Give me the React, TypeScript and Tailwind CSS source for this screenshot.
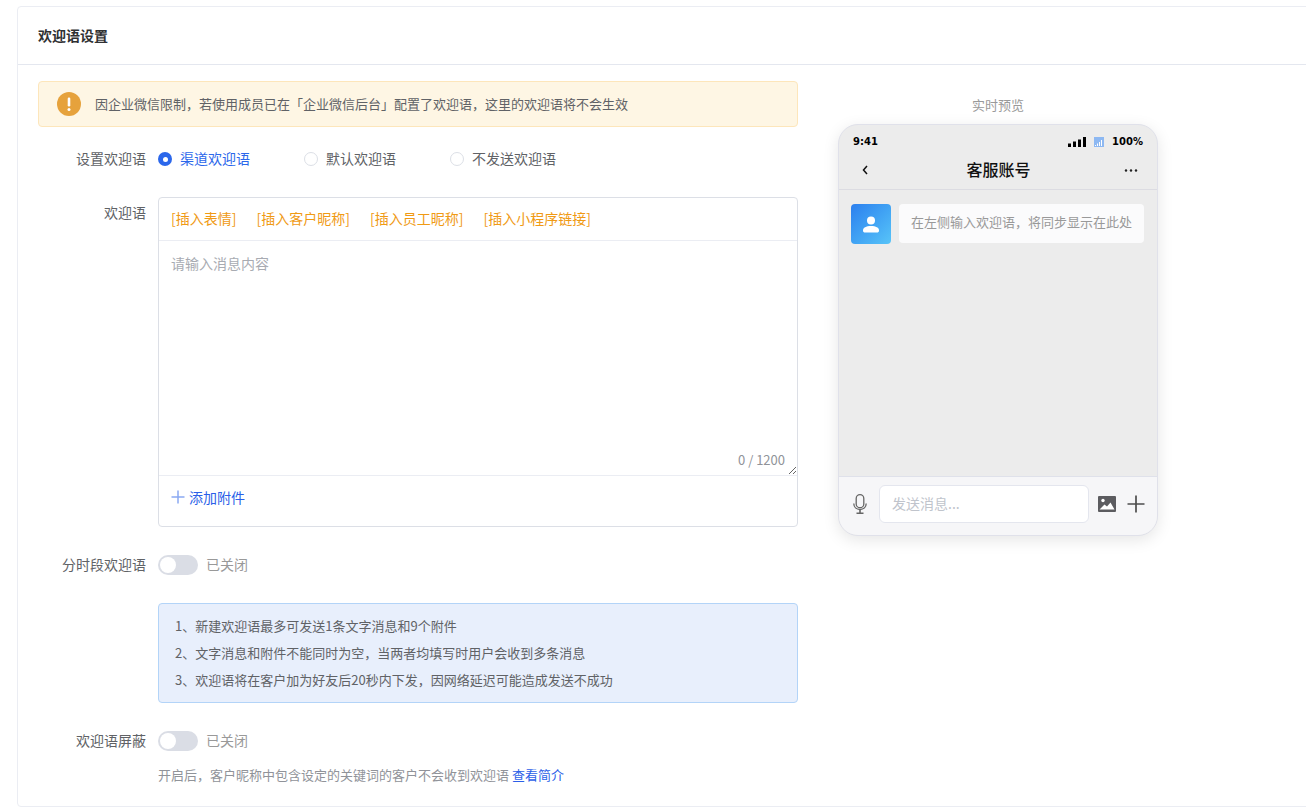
import React from "react";

const font = { fontFamily: '"Noto Sans CJK SC", "Noto Sans", sans-serif' };

function Radio({ label, checked }: { label: string; checked?: boolean }) {
  return (
    <div className="flex w-[146px] items-center">
      {checked ? (
        <span className="flex h-[14px] w-[14px] items-center justify-center rounded-full bg-[#2b67eb]">
          <span className="h-[5px] w-[5px] rounded-full bg-white" />
        </span>
      ) : (
        <span className="h-[14px] w-[14px] rounded-full border border-[#dcdfe6] bg-white" />
      )}
      <span className={`ml-2 h-5 text-[14px] leading-[18px] ${checked ? "text-[#2b67eb]" : "text-[#606266]"}`}>{label}</span>
    </div>
  );
}

function Toggle() {
  return (
    <div className="flex items-center">
      <span className="flex h-5 w-10 items-center rounded-full bg-[#dadde5] pl-[2px]">
        <span className="h-4 w-4 rounded-full bg-white" />
      </span>
      <span className="ml-2 h-5 text-[14px] leading-[18px] text-[#999999]">已关闭</span>
    </div>
  );
}

function Label({ children }: { children: React.ReactNode }) {
  return <div className="h-5 w-[108px] shrink-0 text-right text-[14px] leading-[18px] text-[#606266]">{children}</div>;
}

export default function App() {
  return (
    <div style={font} className="h-[810px] w-[1306px] overflow-hidden bg-white pl-[17px] pt-[6px]">
      <div className="h-[801px] w-[1400px] rounded-[4px] border border-[#ebedf3] bg-white">
        <div className="flex h-[58px] items-center border-b border-[#e4e7ef] pl-5 text-[14px] font-bold text-[#303133]">
          欢迎语设置
        </div>
        <div className="flex pl-5 pt-4">
          <div className="w-[760px] shrink-0">
            <div className="flex h-[46px] items-center rounded-[4px] border border-[#fde6bb] bg-[#fef6e4] pl-[18px]">
              <svg width="24" height="24" viewBox="0 0 24 24">
                <circle cx="12" cy="12" r="12" fill="#e6a23c" />
                <rect x="10.7" y="5.5" width="2.6" height="9" rx="1.2" fill="#fff" />
                <circle cx="12" cy="17.4" r="1.5" fill="#fff" />
              </svg>
              <span className="ml-[14px] text-[13px] leading-5 text-[#606266]">
                因企业微信限制，若使用成员已在「企业微信后台」配置了欢迎语，这里的欢迎语将不会生效
              </span>
            </div>

            <div className="mt-[22px] flex items-center">
              <Label>设置欢迎语</Label>
              <div className="ml-3 flex">
                <Radio label="渠道欢迎语" checked />
                <Radio label="默认欢迎语" />
                <Radio label="不发送欢迎语" />
              </div>
            </div>

            <div className="mt-[28px] flex">
              <div className="pt-[6px]">
                <Label>欢迎语</Label>
              </div>
              <div className="ml-3 h-[330px] w-[640px] rounded-[4px] border border-[#dcdfe6]">
                <div className="flex h-[43px] items-center gap-[20px] border-b border-[#ebedf3] pb-[2px] pl-3 text-[14px] text-[#f09a14]">
                  <span>[插入表情]</span>
                  <span>[插入客户昵称]</span>
                  <span>[插入员工昵称]</span>
                  <span>[插入小程序链接]</span>
                </div>
                <div className="relative h-[235px] border-b border-[#ebedf3]">
                  <textarea
                    placeholder="请输入消息内容"
                    className="block h-full w-full resize-y px-3 pt-3 text-[14px] leading-5 outline-none placeholder:text-[#a8abb2]"
                  />
                  <span className="absolute bottom-[5px] right-3 text-[13px] leading-5 text-[#909399]">0 / 1200</span>
                </div>
                <div className="flex h-[50px] items-center pb-2 pl-3 text-[14px] text-[#2b5fe8]">
                  <svg width="14" height="14" viewBox="0 0 14 14" className="mr-1">
                    <path d="M7 0.5v13M0.5 7h13" stroke="#8aa9f2" strokeWidth="1.5" />
                  </svg>
                  添加附件
                </div>
              </div>
            </div>

            <div className="mt-[28px] flex items-center">
              <Label>分时段欢迎语</Label>
              <div className="ml-3">
                <Toggle />
              </div>
            </div>

            <div className="ml-[120px] mt-[28px] flex h-[100px] w-[640px] flex-col justify-center gap-[7px] rounded-[4px] border border-[#b3d4f8] bg-[#e8effc] pl-4 text-[13px] leading-5 text-[#606266]">
              <div>1、新建欢迎语最多可发送1条文字消息和9个附件</div>
              <div>2、文字消息和附件不能同时为空，当两者均填写时用户会收到多条消息</div>
              <div>3、欢迎语将在客户加为好友后20秒内下发，因网络延迟可能造成发送不成功</div>
            </div>

            <div className="mt-[28px] flex items-center">
              <Label>欢迎语屏蔽</Label>
              <div className="ml-3">
                <Toggle />
              </div>
            </div>

            <div className="ml-[120px] mt-[14px] text-[13px] leading-5 text-[#909399]">
              开启后，客户昵称中包含设定的关键词的客户不会收到欢迎语 <span className="text-[#2b5fe8]">查看简介</span>
            </div>
          </div>

          <div className="ml-10 w-[320px] shrink-0">
            <div className="mb-[9px] pt-[14px] text-center text-[13px] leading-5 text-[#999999]">实时预览</div>
            <div className="flex h-[412px] flex-col overflow-hidden rounded-[20px] border border-[#e0e1ea] bg-[#ececec] shadow-[0_4px_16px_rgba(0,0,0,0.10)]">
              <div className="flex h-[30px] shrink-0 items-center justify-between px-[14px] pt-[3px] text-[10px] font-bold leading-none text-black">
                <span style={{ fontFamily: '"DejaVu Sans", sans-serif' }}>9:41</span>
                <div className="flex items-center">
                  <svg width="18" height="10" viewBox="0 0 18 10" fill="#000">
                    <rect x="0" y="6.5" width="3" height="3.5" />
                    <rect x="5" y="4.5" width="3" height="5.5" />
                    <rect x="10" y="2.5" width="3" height="7.5" />
                    <rect x="15" y="0" width="3" height="10" />
                  </svg>
                  <svg width="10" height="10" viewBox="0 0 10 10" className="ml-[8px]">
                    <rect width="10" height="10" fill="#8db8f2" />
                    <path d="M1.5 9V8M3.5 9V6.5M5.5 9V5M7.5 9V3" stroke="#fff" strokeWidth="1" />
                  </svg>
                  <span className="ml-2" style={{ fontFamily: '"DejaVu Sans", sans-serif' }}>100%</span>
                </div>
              </div>
              <div className="flex h-[35px] shrink-0 items-center justify-between border-b border-[#dcdce2] pb-1 pl-[23px] pr-[19px]">
                <div className="w-[11px]">
                  <svg width="6" height="10" viewBox="0 0 6 10" fill="none">
                    <path d="M5 1L1.5 5L5 9" stroke="#111" strokeWidth="1.5" />
                  </svg>
                </div>
                <span className="h-[17px] text-[16px] font-medium leading-[15px] text-[#111]">客服账号</span>
                <svg width="14" height="3" viewBox="0 0 14 3" fill="#222">
                  <circle cx="2" cy="1.5" r="1.2" />
                  <circle cx="7" cy="1.5" r="1.2" />
                  <circle cx="12" cy="1.5" r="1.2" />
                </svg>
              </div>
              <div className="flex flex-1 items-start gap-2 pl-3 pr-[13px] pt-[14px]">
                <div className="flex h-10 w-10 shrink-0 items-center justify-center rounded-[4px] bg-gradient-to-br from-[#2d7fee] to-[#58c4f8]">
                  <svg width="16" height="17" viewBox="0 0 16 17" fill="#fff">
                    <circle cx="8" cy="4.5" r="4" />
                    <path d="M0 14.5C0 11.5 3 10 8 10s8 1.5 8 4.5c0 1.4-.8 2-2 2H2c-1.2 0-2-.6-2-2z" />
                  </svg>
                </div>
                <div className="flex h-[39px] flex-1 items-center whitespace-nowrap rounded-[4px] bg-[#fbfbfc] pb-1 pl-3 text-[13px] text-[#999999]">
                  在左侧输入欢迎语，将同步显示在此处
                </div>
              </div>
              <div className="flex h-[59px] shrink-0 items-center border-t border-[#dfe1ea] bg-[#f6f6f8] pb-1 pl-[14px]">
                <svg width="14" height="20" viewBox="0 0 14 20" fill="none" stroke="#666" strokeWidth="1.3">
                  <rect x="3.2" y="0.7" width="7.6" height="13" rx="3.8" />
                  <path d="M0.8 9.5c0 3.6 2.6 6 6.2 6s6.2-2.4 6.2-6" />
                  <path d="M7 15.5v3.5M3.5 19.3h7" strokeWidth="1.6" />
                </svg>
                <div className="ml-[12px] flex h-[38px] w-[210px] items-center rounded-[6px] border border-[#e4e6ee] bg-white pb-[2px] pl-3 text-[14px] text-[#c0c4cc]">
                  发送消息...
                </div>
                <svg width="18" height="16" viewBox="0 0 18 16" className="ml-[9px]">
                  <rect width="18" height="16" rx="1" fill="#5c5c60" />
                  <circle cx="5" cy="4.5" r="1.7" fill="#fff" />
                  <path d="M1.5 13.5L6.5 8.5L9 10.5L12.5 6.5L16.5 13.5Z" fill="#fff" />
                </svg>
                <svg width="18" height="18" viewBox="0 0 18 18" className="ml-[11px]">
                  <path d="M9 0.5v17M0.5 9h17" stroke="#4d4d4d" strokeWidth="1.7" />
                </svg>
              </div>
            </div>
          </div>
        </div>
      </div>
    </div>
  );
}
